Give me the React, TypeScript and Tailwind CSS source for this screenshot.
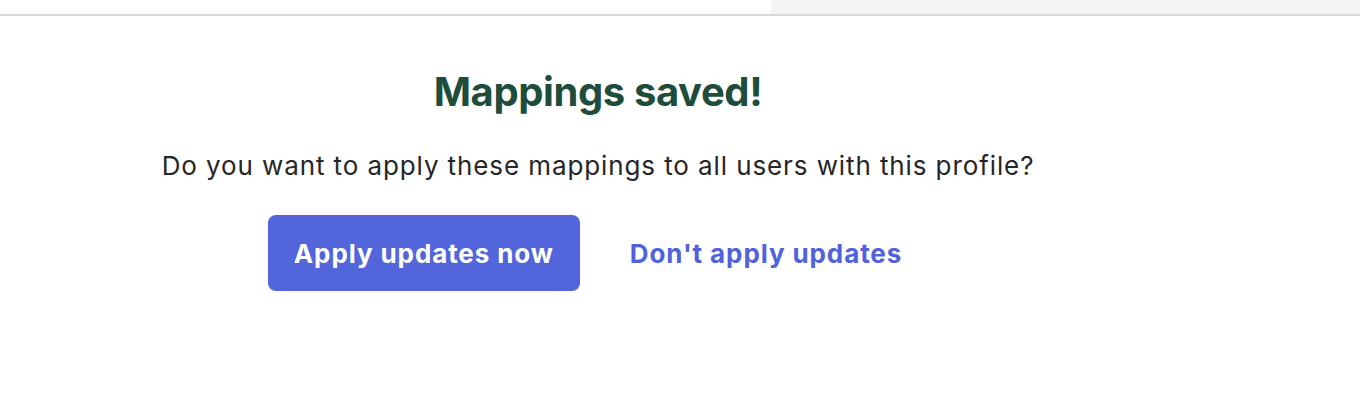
import React from "react";

const App = () => {
  return (
    <div className="w-[1360px] h-[416px] bg-white overflow-hidden" style={{ fontFamily: "Inter, 'Noto Sans', sans-serif" }}>
      <div className="flex h-[14px] border-b-2 border-[#d9d7df] box-content">
        <div className="w-[771px] bg-white" />
        <div className="flex-1 bg-[#f4f4f4]" />
      </div>

      <div className="w-[1196px] flex flex-col items-center pt-[52px]">
        <h1 className="text-[40px] leading-[48px] font-bold tracking-[-0.4px] text-[#1e4d3b]">
          Mappings saved!
        </h1>
        <p className="mt-[35px] text-[26px] leading-[30px] tracking-[0.9px] text-[#262626]">
          Do you want to apply these mappings to all users with this profile?
        </p>
        <div className="mt-[34px] flex items-center gap-[24px]">
          <button className="h-[76px] px-[26px] rounded-[8px] bg-[#5265db] text-white text-[26px] tracking-[0.9px] font-bold">
            Apply updates now
          </button>
          <button className="h-[76px] px-[26px] rounded-[8px] text-[#5162db] text-[26px] tracking-[0.9px] font-bold">
            Don't apply updates
          </button>
        </div>
      </div>
    </div>
  );
};

export default App;
